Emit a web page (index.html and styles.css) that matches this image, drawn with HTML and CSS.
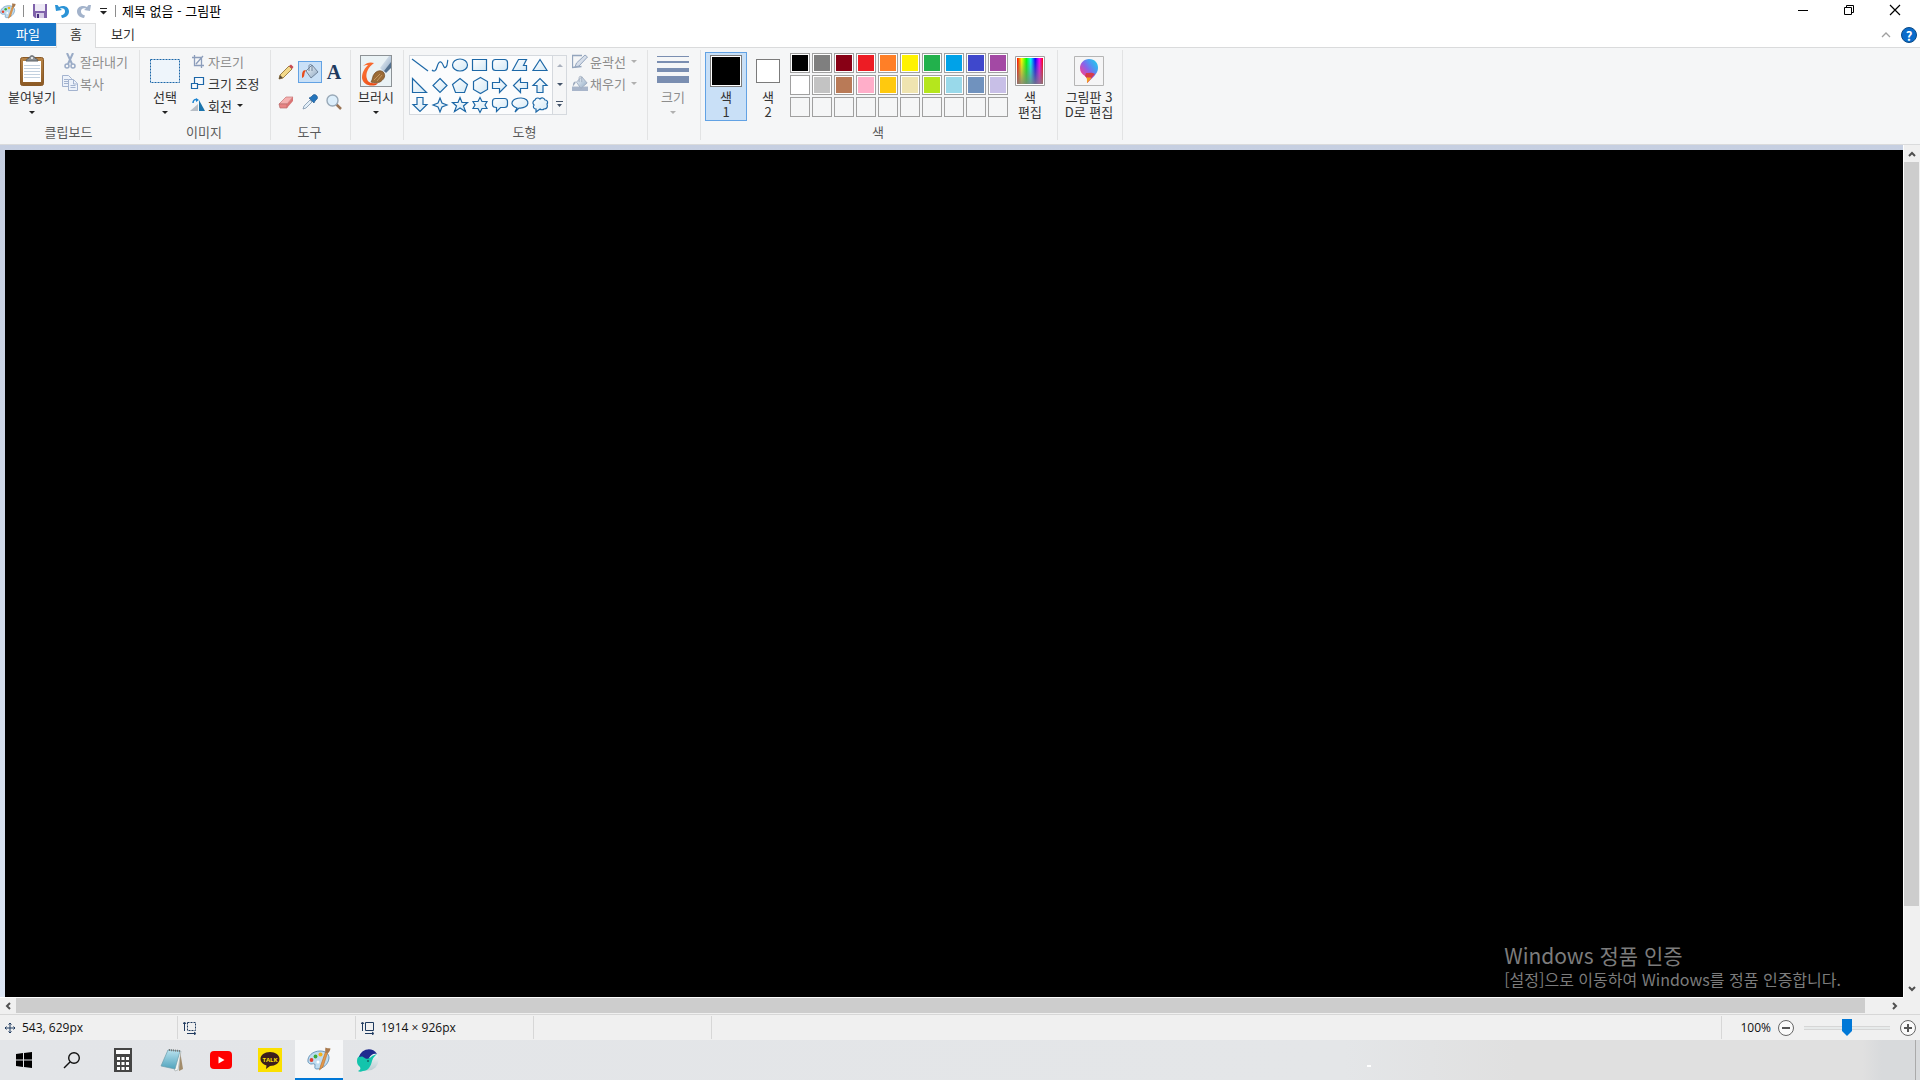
FILE: index.html
```html
<!DOCTYPE html>
<html lang="ko">
<head>
<meta charset="utf-8">
<title>제목 없음 - 그림판</title>
<link rel="stylesheet" href="styles.css">
</head>
<body>
<svg class="defs" aria-hidden="true">
  <defs>
    <linearGradient id="shade" x1="0" y1="0" x2="1" y2="1"><stop offset="0" stop-color="#fff"/><stop offset="1" stop-color="#d3e8f5"/></linearGradient>
    <linearGradient id="wood" x1="0" y1="0" x2="0" y2="1"><stop offset="0" stop-color="#b98547"/><stop offset="1" stop-color="#8c5a24"/></linearGradient>
    <linearGradient id="orange" x1="0" y1="0" x2="1" y2="1"><stop offset="0" stop-color="#ff7a3d"/><stop offset="1" stop-color="#e8420c"/></linearGradient>
    <linearGradient id="metal" x1="0" y1="0" x2="1" y2="1"><stop offset="0" stop-color="#f4f8fb"/><stop offset="1" stop-color="#8fa9c4"/></linearGradient>
    <linearGradient id="drop" x1="1" y1="0" x2="0" y2="1"><stop offset="0" stop-color="#18d8e8"/><stop offset=".3" stop-color="#4a9af2"/><stop offset=".5" stop-color="#8a62ea"/><stop offset=".75" stop-color="#e8459c"/><stop offset="1" stop-color="#f03060"/></linearGradient>
    <linearGradient id="spectrum"><stop offset="0" stop-color="#f00"/><stop offset=".18" stop-color="#ff0"/><stop offset=".36" stop-color="#0f0"/><stop offset=".53" stop-color="#0ff"/><stop offset=".7" stop-color="#00f"/><stop offset=".86" stop-color="#f0f"/><stop offset="1" stop-color="#f00"/></linearGradient>
    <linearGradient id="fade" x1="0" y1="0" x2="0" y2="1"><stop offset="0" stop-color="#808080" stop-opacity="0"/><stop offset="1" stop-color="#808080" stop-opacity=".85"/></linearGradient>
    <linearGradient id="note" x1="0" y1="0" x2="0" y2="1"><stop offset="0" stop-color="#b9e2ee"/><stop offset="1" stop-color="#4fa3bd"/></linearGradient>
    <linearGradient id="belly" x1="0" y1="0" x2="0" y2="1"><stop offset="0" stop-color="#fff"/><stop offset="1" stop-color="#b9cdd2"/></linearGradient>
    <symbol id="palette" viewBox="0 0 24 24">
      <path d="M1 15C0 9 6 4 13 4c6 0 9 3 9 7-.5 6-6 11-12 11-3 0-2-2-2-4s-2-1-4-1c-1 0-2.500-1-3-2z" fill="#bfdcf0" stroke="#5f8fb5" stroke-width=".9"/>
      <circle cx="4.500" cy="13" r="1.900" fill="#e2402e"/><circle cx="8.500" cy="9.500" r="1.900" fill="#39ac3d"/><circle cx="13.500" cy="7.500" r="2" fill="#f2b21c"/>
      <circle cx="11" cy="15" r="1.500" fill="#fff"/>
      <path d="M12.500 23l1-4 5-14 2 .8-4.500 14z" fill="#e39a4c" stroke="#b86a24" stroke-width=".6"/>
      <path d="M18.300 5.500c0-2-.3-3 .2-5 1.500 1 3 .5 5 1-.5 2-1 4-3 4.800z" fill="#a97a4e"/>
    </symbol>
    <symbol id="bucket" viewBox="0 0 18 18">
      <path d="M5 8l6-6 6 7-7 6z" fill="url(#metal)" stroke="currentColor"/>
      <path d="M8 8V3c0-2 3-2 3 0v5" fill="none" stroke="currentColor"/>
    </symbol>
  </defs>
</svg>

<div class="window">
  <header class="titlebar">
    <div class="quick">
      <svg class="i16" viewBox="0 0 24 24"><use href="#palette"/></svg>
      <span class="bar"></span>
      <button class="plain save" aria-label="저장"><svg width="14" height="14" viewBox="0 0 14 14"><path d="M0 0h14v14H2L0 12z" fill="#7f62ab"/><path d="M2 0h10v7H2z" fill="#eeeaf6"/><path d="M3 9h8v5H3z" fill="#d5cce6"/><path d="M4 10h2v4H4z" fill="#4a3180"/></svg></button>
      <button class="plain" aria-label="실행 취소"><svg width="14" height="14" viewBox="0 0 14 14"><path d="M0 1l1 6 6-1-2-1.500c3-1 5.500.5 5 3.500-.2 2-2 3-4 3.500L7 14c4-.5 7-3 7-6.500C14 3 9 .5 4 3L2.500 1z" fill="#2b93d6"/></svg></button>
      <button class="plain" aria-label="다시 실행"><svg width="14" height="14" viewBox="0 0 14 14"><path d="M14 1l-1 6-6-1 2-1.500c-3-1-5.500.5-5 3.500.2 2 2 3 4 3.500L7 14c-4-.5-7-3-7-6.500C0 3 5 .5 10 3l1.500-2z" fill="#a3b3cb"/></svg></button>
      <button class="plain more" aria-label="빠른 실행 도구 모음 사용자 지정"><svg width="7" height="7" viewBox="0 0 7 7"><path d="M0 0h7v1H0zM0 3h7L3.500 6.500z" fill="#222"/></svg></button>
      <span class="bar"></span>
      <h1>제목 없음 - 그림판</h1>
    </div>
    <div class="caption">
      <button class="plain" aria-label="최소화"><svg width="12" height="12" viewBox="0 0 12 12"><path d="M1 6.500h10" stroke="#000"/></svg></button>
      <button class="plain" aria-label="이전 크기로 복원"><svg width="12" height="12" viewBox="0 0 12 12"><path d="M1.500 3.500h7v7h-7zM3.500 3V1.500h7v7H9" fill="none" stroke="#000"/></svg></button>
      <button class="plain" aria-label="닫기"><svg width="12" height="12" viewBox="0 0 12 12"><path d="M1 1l10 10M11 1L1 11" stroke="#000" stroke-width="1.200"/></svg></button>
    </div>
  </header>

  <nav class="tabs">
    <button class="tab file">파일</button>
    <button class="tab home">홈</button>
    <button class="tab">보기</button>
    <div class="help">
      <button class="plain" aria-label="리본 최소화"><svg width="10" height="6" viewBox="0 0 10 6"><path d="M1 5l4-4 4 4" fill="none" stroke="#a0a0a0" stroke-width="1.300"/></svg></button>
      <button class="plain round" aria-label="도움말">?</button>
    </div>
  </nav>

  <section class="ribbon">
    <div class="group clipboard">
      <div class="body">
        <button class="big paste"><span class="pic"><svg width="26" height="32" viewBox="0 0 26 32"><rect x="1.500" y="2.500" width="23" height="28" rx="2" fill="url(#wood)" stroke="#8a5a28"/><path d="M4 6h18v21H4z" fill="#fff"/><path d="M5 10.500h16M5 13.500h16M5 16.500h16M5 19.500h16M5 22.500h16" stroke="#c3d1df"/><path d="M7 6c0-2 2-2 3-3 1-3 5-3 6 0 1 1 3 1 3 3z" fill="#8c9196" stroke="#5c6064"/><circle cx="13" cy="3" r="1" fill="#fff"/></svg></span><span>붙여넣기</span><i class="arrow"></i></button>
        <div class="rows">
          <button class="small" disabled><svg class="i16" viewBox="0 0 16 16" fill="none" stroke="#9aabc6" stroke-width="2"><path d="M5 0l5 11M11 0L6 11"/><circle cx="5" cy="13" r="2" stroke-width="1.500"/><circle cx="11" cy="13" r="2" stroke-width="1.500"/></svg>잘라내기</button>
          <button class="small" disabled><svg class="i16" viewBox="0 0 16 16" fill="#edf2fa" stroke="#a3b3cf"><path d="M.5.500h6l3 3v8h-9z"/><path d="M2 4.500h4M2 6.500h4M2 8.500h4"/><path d="M6.500 4.500h5l4 4v7h-9z"/><path d="M11.500 5v4h4M8.500 10.500h5M8.500 12.500h5"/></svg>복사</button>
        </div>
      </div>
      <h2>클립보드</h2>
    </div>

    <div class="group image">
      <div class="body">
        <button class="big"><span class="pic"><svg width="30" height="24" viewBox="0 0 30 24"><rect x=".5" y=".5" width="29" height="23" fill="#eef5fb" stroke="#1b66a8" stroke-dasharray="2 1"/></svg></span><span>선택</span><i class="arrow"></i></button>
        <div class="rows">
          <button class="small" disabled><svg class="i16" viewBox="0 0 16 16" fill="none" stroke="#8c9dbb"><path d="M4.500 2v10.500H14M2 4.500h9.500V15M6 11l7-8" stroke-width="1.300"/></svg>자르기</button>
          <button class="small"><svg class="i16" viewBox="0 0 16 16" fill="#f5f9fd" stroke="#1b66a8" stroke-width="1.200"><path d="M4.500 2.500h9v7h-9z"/><path d="M1.500 8.500h6v5h-6z"/></svg>크기 조정</button>
          <button class="small"><svg class="i16" viewBox="0 0 16 16"><path d="M0 14l8-7v7z" fill="#b8bec6"/><path d="M9 3l6 11H9z" fill="#1b74ad"/><path d="M3 6c0-3 2-4 4-3" fill="none" stroke="#1b83d1" stroke-width="1.500"/><path d="M6 1l3 2-3 2z" fill="#1b83d1"/></svg>회전<i class="arrow"></i></button>
        </div>
      </div>
      <h2>이미지</h2>
    </div>

    <div class="group tools">
      <div class="toolgrid">
        <button class="tool" aria-label="연필"><svg class="i16" viewBox="0 0 16 16"><path d="M1 15l1-4L11 2l3 3-9 9z" fill="#f3d98a" stroke="#8a6a2c" stroke-width=".8"/><path d="M11 2l2-1.500L15.500 3 14 5z" fill="#c94b51"/><path d="M1 15l1-4 3 3z" fill="#5a4a38"/></svg></button>
        <button class="tool on" aria-label="색 채우기"><svg class="i18" viewBox="0 0 18 18" color="#71849b"><use href="#bucket"/><path d="M5 7C1 7 1 10 1 15c3-1 2-4 3-6z" fill="#e84b1c"/></svg></button>
        <button class="tool letter" aria-label="텍스트">A</button>
        <button class="tool" aria-label="지우개"><svg class="i16" viewBox="0 0 16 16"><path d="M1 10l7-7 7 0-6 7z" fill="#f5b1b1" stroke="#c67575" stroke-width=".7"/><path d="M1 10h8v4H2z" fill="#e88585" stroke="#b96a6a" stroke-width=".7"/><path d="M9 10l6-7v4l-6 7z" fill="#d97474"/></svg></button>
        <button class="tool" aria-label="색 선택"><svg class="i16" viewBox="0 0 16 16"><path d="M1 15l1-3 6-6 2 2-6 6z" fill="#e2eef8" stroke="#7c93ab" stroke-width=".8"/><path d="M7 4l5 5 1-2 2-2c2-2-2-6-4-4L9 3z" fill="#2474bb" stroke="#1a4f86" stroke-width=".6"/></svg></button>
        <button class="tool" aria-label="돋보기"><svg class="i16" viewBox="0 0 16 16"><path d="M10 10l5 5" stroke="#9a7455" stroke-width="2.500"/><circle cx="6.500" cy="6.500" r="5.500" fill="#dceefb" stroke="#99a9b8" stroke-width="1.400"/></svg></button>
      </div>
      <h2>도구</h2>
    </div>

    <div class="group brush">
      <div class="body center">
        <button class="big wide"><span class="pic"><svg width="32" height="32" viewBox="0 0 32 32"><rect x=".5" y=".5" width="31" height="31" fill="#eaf2f5" stroke="#8d9296"/><path d="M3 11c4-4 8-4 11-3-6 4-9 11-7 16 1 4 6 5 11 4l-2 2C9 32 3 29 2 23c0-6 3-10 6-13-2 0-3 0-5 1z" fill="url(#orange)"/><path d="M20 13L29 1h2v10l-7 6z" fill="url(#metal)"/><path d="M24 16l7-9v6l-5 5z" fill="#54718f"/><path d="M11 27c2-3 1-6 4-9 3-3 7-3 9 0 2 4-1 7-4 9-3 1-6 1-9 0z" fill="#9b6b36" stroke="#6a4520" stroke-width=".7"/><path d="M14 25l6-6M17 26l5-6" stroke="#c59862"/></svg></span><span>브러시</span><i class="arrow"></i></button>
      </div>
    </div>

    <div class="group shapes">
      <div class="body">
        <div class="gallery">
          <svg class="shapegrid" width="142" height="58" viewBox="0 0 142 58" fill="url(#shade)" stroke="#1d68a7" stroke-width="1.200">
            <path d="M2 3l16 12"/>
            <path d="M22 14c2 2 4 1 5-3s3-7 5-4 2 6 4 4 1-6 2-7" fill="none"/>
            <ellipse cx="50" cy="9" rx="7.500" ry="6"/><path d="M62.500 3.500h14v11h-14z"/><rect x="82.500" y="3.500" width="15" height="11" rx="3"/>
            <path d="M102.500 14.500l6-11h8l-3 6h3v5z"/><path d="M130 3.500l7 11h-14z"/>
            <path d="M2.500 22.500v14h14z"/><path d="M30 22.500l7 7-7 7-7-7z"/><path d="M50 22.500l7.500 6-3 8h-9l-3-8z"/><path d="M70.500 21.500l7 4v8l-7 4-7-4v-8z"/>
            <path d="M82.500 26.500h7v-4l7 7-7 7v-4h-7z"/><path d="M117.500 26.500h-7v-4l-7 7 7 7v-4h7z"/><path d="M127 36.500v-7h-4l7-7 7 7h-4v7z"/>
            <path d="M7 41.500v7H3l7 7 7-7h-4v-7z"/><path d="M30 42l2 5 5 2-5 2-2 5-2-5-5-2 5-2z"/>
            <path d="M50 41.500l2 5h5.500l-4 3.500 2 5.500-5.500-3.500-5.500 3.500 2-5.500-4-3.500H48z"/>
            <path d="M70 41.500l2 4h5l-2 3.500 2 3.500h-5l-2 4-2-4h-5l2-3.500-2-3.500h5z"/>
            <path d="M85.500 42.500h9c2 0 3 1 3 3v3c0 2-1 3-3 3h-4l-4 4v-4c-3 0-4-1-4-3v-3c0-2 1-3 3-3z"/>
            <path d="M107 52c-9-3-5-10 4-10 10 0 9 11-2 10l-4 4z"/>
            <path d="M125 44c1-3 4-2 5-1 2-2 4-1 5 1 3 0 3 3 2 4 1 3 0 5-3 5-1 1-3 1-4 0l-4 3v-3c-3 0-3-3-2-4-2-2-1-4 1-5z"/>
          </svg>
          <div class="spin">
            <button class="plain" aria-label="위로"><i class="arrow up"></i></button>
            <button class="plain" aria-label="아래로"><i class="arrow"></i></button>
            <button class="plain" aria-label="자세히"><svg width="7" height="7" viewBox="0 0 7 7"><path d="M0 0h7v1H0zM1 3h5L3.500 6z" fill="#44546a"/></svg></button>
          </div>
        </div>
        <div class="rows">
          <button class="small" disabled><svg class="i16" viewBox="0 0 16 16"><path d="M10 2.500H.500v12l9-1" fill="none" stroke="#94a5bd" stroke-width="1.300"/><path d="M3 14l1.500-4L13 2l2.500 2L7 13z" fill="#d6deea" stroke="#94a5bd"/></svg>윤곽선<i class="arrow"></i></button>
          <button class="small" disabled><svg class="i16" viewBox="0 0 18 18" color="#9daabd"><path d="M0 13h18v5H0z" fill="#a8b5ca"/><use href="#bucket"/><path d="M4 7c-3 1-3 3-3 6l3-4z" fill="#9daabd"/></svg>채우기<i class="arrow"></i></button>
        </div>
      </div>
      <h2>도형</h2>
    </div>

    <div class="group size">
      <div class="body center">
        <button class="big" disabled><span class="pic"><svg width="32" height="32" viewBox="0 0 32 32" fill="#7a8eb1"><path d="M0 1h32v1H0zM0 6h32v2H0zM0 13h32v4H0zM0 21h32v7H0z"/></svg></span><span>크기</span><i class="arrow"></i></button>
      </div>
    </div>

    <div class="group colors">
      <div class="body">
        <button class="big on"><span class="pic"><span class="swatch one"></span></span><span>색<br>1</span></button>
        <button class="big"><span class="pic"><span class="swatch two"></span></span><span>색<br>2</span></button>
        <div class="chips">
          <button aria-label="검정" style="--c:#000"></button><button aria-label="회색 50%" style="--c:#7f7f7f"></button><button aria-label="진한 빨강" style="--c:#880015"></button><button aria-label="빨강" style="--c:#ed1c24"></button><button aria-label="주황" style="--c:#ff7f27"></button><button aria-label="노랑" style="--c:#fff200"></button><button aria-label="녹색" style="--c:#22b14c"></button><button aria-label="옥색" style="--c:#00a2e8"></button><button aria-label="남색" style="--c:#3f48cc"></button><button aria-label="자주" style="--c:#a349a4"></button>
          <button aria-label="흰색" style="--c:#fff"></button><button aria-label="회색 25%" style="--c:#c3c3c3"></button><button aria-label="갈색" style="--c:#b97a57"></button><button aria-label="장미" style="--c:#ffaec9"></button><button aria-label="황금색" style="--c:#ffc90e"></button><button aria-label="연한 노랑" style="--c:#efe4b0"></button><button aria-label="라임" style="--c:#b5e61d"></button><button aria-label="연한 옥색" style="--c:#99d9ea"></button><button aria-label="청회색" style="--c:#7092be"></button><button aria-label="연보라" style="--c:#c8bfe7"></button>
          <button class="empty" aria-label="빈 색 1"></button><button class="empty" aria-label="빈 색 2"></button><button class="empty" aria-label="빈 색 3"></button><button class="empty" aria-label="빈 색 4"></button><button class="empty" aria-label="빈 색 5"></button><button class="empty" aria-label="빈 색 6"></button><button class="empty" aria-label="빈 색 7"></button><button class="empty" aria-label="빈 색 8"></button><button class="empty" aria-label="빈 색 9"></button><button class="empty" aria-label="빈 색 10"></button>
        </div>
        <button class="big"><span class="pic"><svg width="30" height="30" viewBox="0 0 30 30"><path d="M.5.500h29v29H.500z" fill="#fff" stroke="#a0a0a0"/><path d="M2 2h26v26H2z" fill="url(#spectrum)"/><path d="M2 2h26v26H2z" fill="url(#fade)"/></svg></span><span>색<br>편집</span></button>
      </div>
      <h2>색</h2>
    </div>

    <div class="group three">
      <div class="body center">
        <button class="big wide"><span class="pic"><svg width="30" height="30" viewBox="0 0 30 30"><path d="M.5.500h29v29H.500z" fill="#f5f5f6" stroke="#b5b5b5"/><path d="M15 3c6 0 9 4 9 9 0 6-6 10-11 15 1-4 0-5-2-7-3-2-5-4-5-8 0-5 4-9 9-9z" fill="url(#drop)"/><path d="M12 17c3 0 6-1 9 1-3 3-5 6-8 9 1-4 0-5-2-7z" fill="#d63a4c"/><path d="M12.500 21c2 1 4 0 5 1l-4.500 5c0-3 0-4-.5-6z" fill="#f2a020"/></svg></span><span>그림판 3<br>D로 편집</span></button>
      </div>
    </div>
  </section>

  <main class="workspace">
    <div class="view">
      <div class="canvas">
        <div class="watermark"><p class="lead">Windows 정품 인증</p><p>[설정]으로 이동하여 Windows를 정품 인증합니다.</p></div>
      </div>
    </div>
    <div class="vscroll">
      <button class="plain" aria-label="위로 스크롤"><svg width="8" height="6" viewBox="0 0 8 6"><path d="M1 5l3-3 3 3" /></svg></button>
      <div class="track"><div class="thumb"></div></div>
      <button class="plain" aria-label="아래로 스크롤"><svg width="8" height="6" viewBox="0 0 8 6"><path d="M1 1l3 3 3-3"/></svg></button>
    </div>
    <div class="hscroll">
      <button class="plain" aria-label="왼쪽으로 스크롤"><svg width="6" height="8" viewBox="0 0 6 8"><path d="M5 1L2 4l3 3"/></svg></button>
      <div class="track"><div class="thumb"></div></div>
      <button class="plain" aria-label="오른쪽으로 스크롤"><svg width="6" height="8" viewBox="0 0 6 8"><path d="M1 1l3 3-3 3"/></svg></button>
    </div>
    <div class="corner"></div>
  </main>

  <footer class="status">
    <div class="cell"><svg width="12" height="12" viewBox="0 0 12 12" fill="none" stroke="#1f3a5f"><path d="M6 1v10M1 6h10M4.500 2.500L6 1l1.500 1.500M4.500 9.500L6 11l1.500-1.500M2.500 4.500L1 6l1.500 1.500M9.500 4.500L11 6 9.500 7.500"/></svg><span>543, 629px</span></div>
    <div class="cell"><svg width="14" height="14" viewBox="0 0 14 14" fill="none" stroke="#1f3a5f"><path d="M4.500 1.500h8v8h-8z" stroke-dasharray="2 1"/><path d="M1.500 10V2M0 3l1.500-2L3 3M4 12.500h8M11 11l2 1.500-2 1.500"/></svg></div>
    <div class="cell"><svg width="14" height="14" viewBox="0 0 14 14" fill="none" stroke="#1f3a5f"><path d="M4.500 1.500h8v8h-8z"/><path d="M1.500 10V2M0 3l1.500-2L3 3M4 12.500h8M11 11l2 1.500-2 1.500"/></svg><span>1914 × 926px</span></div>
    <div class="cell"></div>
    <div class="zoom">
      <label for="zoom">100%</label>
      <button class="plain" aria-label="축소"><svg width="16" height="16" viewBox="0 0 16 16"><circle cx="8" cy="8" r="7.500" fill="#fafafa" stroke="#666"/><path d="M4 7h8v2H4z" fill="#555"/></svg></button>
      <input type="range" id="zoom" min="0" max="100" value="50">
      <button class="plain" aria-label="확대"><svg width="16" height="16" viewBox="0 0 16 16"><circle cx="8" cy="8" r="7.500" fill="#fafafa" stroke="#666"/><path d="M4 7h3V4h2v3h3v2H9v3H7V9H4z" fill="#555"/></svg></button>
    </div>
  </footer>
</div>

<nav class="taskbar">
  <button class="app" aria-label="시작"><svg width="16" height="16" viewBox="0 0 16 16"><path d="M0 2l7-1v6.500H0zM8 1l8-1v7.500H8zM0 8.500h7V15l-7-1zM8 8.500h8V16l-8-1z"/></svg></button>
  <button class="app" aria-label="검색"><svg width="18" height="18" viewBox="0 0 18 18" fill="none" stroke="#111" stroke-width="1.400"><circle cx="11" cy="7" r="5.300"/><path d="M7 11l-6 6"/></svg></button>
  <div class="pins">
    <button class="app" aria-label="계산기"><svg width="18" height="24" viewBox="0 0 18 24"><path d="M0 0h18v24H0z" fill="#454545"/><path d="M2 2h14v4H2z" fill="#fff"/><path d="M3 10.500h12M3 15.500h12M3 20.500h12" stroke="#fff" stroke-width="3" stroke-dasharray="3 1.500"/></svg></button>
    <button class="app" aria-label="메모장"><svg width="24" height="24" viewBox="0 0 24 24"><path d="M20 3l3 18-4 2z" fill="#a28c6b"/><path d="M8 2l13 1-3 19-3 1z" fill="#f5f5f0" stroke="#9fa9ac" stroke-width=".6"/><path d="M8 2l12 1-5 18L1 18z" fill="url(#note)" stroke="#6b9dac" stroke-width=".7"/><path d="M9 2l11 1" stroke="#777" stroke-width="2" stroke-dasharray="1 1"/></svg></button>
    <button class="app" aria-label="YouTube"><svg width="24" height="24" viewBox="0 0 24 24"><rect x="1" y="3" width="22" height="18" rx="4" fill="#f00"/><path d="M9.500 8.500v7l6-3.500z" fill="#fff"/></svg></button>
    <button class="app" aria-label="카카오톡"><svg width="24" height="24" viewBox="0 0 24 24"><path d="M0 0h24v24H0z" fill="#fbe000"/><path d="M12 4c5.500 0 9.500 3 9.500 7s-4 7-9.500 7l-4 3 .5-3.500C5 16.500 2.500 14 2.500 11c0-4 4-7 9.500-7z" fill="#3b1e1e"/><text x="12" y="13.500" text-anchor="middle" class="talk">TALK</text></svg></button>
    <button class="app active" aria-label="그림판"><svg width="24" height="24" viewBox="0 0 24 24"><use href="#palette"/></svg></button>
    <button class="app" aria-label="웨일"><svg width="22" height="23" viewBox="0 0 22 23"><circle cx="11" cy="11" r="10.500" fill="url(#belly)"/><path d="M0 12C0 8 2 6 6 7c4 1 6 3 8 1 2-2 4-2 6-3-1 1-4 3-5 7-1 5-4 10-9 10-2 1-4 1-5 0 2-1 3-2 2-4-2-2-3-3-3-6z" fill="#13c4ac"/><path d="M2 8C4 0 15-3 20 5c-4-1-6 1-8 4-2 2-4 0-6-1-1-1-3 0-4 0z" fill="#1f2b8f"/><circle cx="11" cy="12" r=".8" fill="#123"/></svg></button>
  </div>
  <span class="speck"></span>
  <button class="plain desktop" aria-label="바탕 화면 보기"></button>
</nav>
</body>
</html>
```
FILE: styles.css
```css
* { box-sizing: border-box; }

body {
  margin: 0;
  height: 100vh;
  display: flex;
  flex-direction: column;
  overflow: hidden;
  background: #fff;
  color: #333;
  font: 13px/15px "Noto Sans CJK KR", sans-serif;
}

button { font: inherit; color: inherit; background: none; border: 0; padding: 0; margin: 0; }
svg { display: block; flex: none; }
h1, h2, p { margin: 0; font-weight: 400; }
h1, h2 { font-size: 13px; }
.defs { position: absolute; width: 0; height: 0; }
.i16 { width: 16px; height: 16px; }
.i18 { width: 18px; height: 18px; }
.plain { display: flex; align-items: center; justify-content: center; }
.window { flex: 1; min-height: 0; display: flex; flex-direction: column; }

/* title bar */
.titlebar { display: flex; justify-content: space-between; height: 23px; }
.quick { display: flex; align-items: center; gap: 8px; padding-bottom: 1px; }
.quick .save { margin-left: 1px; }
.quick .bar { width: 1px; height: 12px; background: #8c8c8c; }
.quick .bar:first-of-type { margin-left: -1px; }
.quick h1 { color: #000; margin-left: -2px; padding-bottom: 1px; }
.quick .more { width: 8px; }
.caption { display: flex; padding-right: 2px; }
.caption .plain { width: 46px; height: 20px; }

/* ribbon tabs */
.tabs { display: flex; height: 25px; border-bottom: 1px solid #dadbdc; }
.tab { padding: 0 15px 4px; }
.tab.file { width: 56px; height: 23px; padding: 0 0 3px; background: #1979ca; color: #fff; }
.tab.home { width: 40px; height: 25px; padding: 0 0 5px; background: #f5f6f7; border: 1px solid #dadbdc; border-bottom: 0; }
.help { display: flex; align-items: center; gap: 10px; margin-left: auto; padding-right: 3px; }
.round { width: 16px; height: 16px; border-radius: 50%; background: #0a6ccb; border: 1px solid #0b4a86; color: #fff; font-weight: 700; }

/* ribbon */
.ribbon { display: flex; height: 97px; padding: 2px 0 4px; background: #f5f6f7; border-bottom: 1px solid #dadbdc; }
.group { display: flex; flex-direction: column; border-right: 1px solid #e2e3e4; }
.group h2 { margin-top: auto; height: 16px; padding-right: 2px; text-align: center; color: #5a5a5a; }
.body { display: flex; }
.body.center { justify-content: center; padding-right: 2px; }
.clipboard { width: 140px; }
.clipboard .body { padding-left: 7px; gap: 5px; }
.image { width: 131px; }
.image .body { padding-left: 4px; gap: 4px; }
.tools { width: 80px; }
.brush, .size { width: 53px; }
.shapes { width: 244px; }
.shapes .body { padding-left: 5px; gap: 5px; }
.colors { width: 357px; }
.colors .body { padding-left: 4px; }
.three { width: 65px; }

.big { display: flex; flex-direction: column; align-items: center; width: 42px; height: 69px; margin-top: 2px; padding-top: 2px; border: 1px solid transparent; text-align: center; white-space: nowrap; }
.big .pic { display: flex; align-items: center; justify-content: center; width: 32px; height: 32px; margin-bottom: 2px; }
.big.paste, .big.wide { width: 50px; }
.big .arrow { margin-top: 7px; }
.big.on, .tool.on { background: #c9e0f7; border: 1px solid #62a2e4; }
.rows { display: flex; flex-direction: column; }
.small { display: flex; align-items: center; gap: 2px; height: 22px; white-space: nowrap; }
.small .arrow { margin-left: 3px; }
button:disabled { color: #8d8d8d; }

.arrow { flex: none; border: solid transparent; border-width: 3px 3px 0; border-top-color: #222; }
.arrow.up { border-width: 0 3px 3px; border-bottom-color: #a9b0bd; }
button:disabled .arrow { border-top-color: #b0b0b0; }

.toolgrid { display: grid; grid-template-columns: repeat(3, 24px); grid-auto-rows: 22px; row-gap: 8px; padding: 11px 0 0 3px; }
.tool { display: flex; align-items: center; justify-content: center; }
.letter { font: 700 20px/20px "Liberation Serif", serif; color: #1f3a5f; }

.gallery { display: flex; height: 60px; margin-top: 5px; border: 1px solid #d5d9de; background: #fbfcfd; }
.spin { display: flex; flex-direction: column; width: 14px; border-left: 1px solid #d5d9de; background: #f5f6f7; }
.spin .plain { flex: 1; }
.spin .arrow:not(.up) { border-top-color: #44546a; }

.swatch { border: 1px solid #7b7b7b; box-shadow: inset 0 0 0 1px #fff; }
.one { width: 32px; height: 32px; background: #000; }
.two { width: 24px; height: 24px; background: #fff; }
.chips { display: grid; grid-template-columns: repeat(10, 20px); grid-auto-rows: 20px; gap: 2px; margin: 3px 1px 0; }
.chips button { border: 1px solid #a0a0a0; background: var(--c); box-shadow: inset 0 0 0 1px #fff; }
.chips .empty { background: #f5f6f7; box-shadow: none; }

/* drawing area */
.workspace { flex: 1; min-height: 0; display: grid; grid-template: 1fr 17px / 1fr 17px; }
.view { display: flex; padding: 5px 0 0 5px; background: linear-gradient(#c6cfe1, #dce6f4); }
.canvas { flex: 1; position: relative; background: #000; }
.watermark { position: absolute; right: 62px; bottom: 6px; color: #7c7c7c; font-size: 16px; line-height: 23px; font-weight: 300; white-space: nowrap; }
.watermark .lead { font-size: 21px; line-height: 25px; }
.vscroll, .hscroll, .corner { background: #f0f0f0; }
.vscroll, .hscroll { display: flex; }
.vscroll { flex-direction: column; border-left: 1px solid #fff; padding-right: 1px; }
.hscroll { border-top: 1px solid #fff; padding-bottom: 1px; }
.vscroll .plain { height: 17px; }
.hscroll .plain { width: 16px; }
.track { flex: 1; display: flex; }
.vscroll .track { flex-direction: column; }
.thumb { background: #cdcdcd; }
.vscroll .thumb { height: 91%; }
.hscroll .thumb { width: 98.8%; }
.workspace .plain path { fill: none; stroke: #505050; stroke-width: 2; }

/* status bar */
.status { display: flex; height: 26px; padding: 1px 0; background: #f0f0f0; border-top: 1px solid #d7d7d7; color: #111; font: 12px/15px "Open Sans", "Noto Sans CJK KR", sans-serif; }
.cell { display: flex; align-items: center; gap: 6px; width: 178px; padding-left: 4px; border-right: 1px solid #d7d7d7; }
.cell + .cell { padding-left: 5px; }
.zoom { display: flex; align-items: center; margin-left: auto; padding: 0 4px 0 18px; border-left: 1px solid #d7d7d7; }
.zoom label { margin-right: 7px; }
.zoom input { appearance: none; width: 86px; height: 18px; margin: 0 10px; background: linear-gradient(#d6d6d6, #d6d6d6 1px, #e7eaea 1px, #e7eaea 3px, #d6d6d6 3px) center / 100% 4px no-repeat; }
.zoom input::-webkit-slider-runnable-track { height: 17px; }
.zoom input::-webkit-slider-thumb { appearance: none; width: 10px; height: 17px; background: #0078d7; clip-path: polygon(0 0, 100% 0, 100% 70%, 50% 100%, 0 70%); }

/* taskbar */
.taskbar { position: relative; display: flex; height: 40px; background: linear-gradient(90deg, #e3e5e8 0, #e4e6e8 70%, #e0e0e0 79%, #e0e0e0 97%, #d8dadc 98%); }
.app { display: flex; align-items: center; justify-content: center; width: 48px; height: 40px; }
.pins { display: flex; gap: 1px; margin-left: 3px; }
.active { background: #f6f7f8; border-bottom: 2px solid #0078d7; }
.talk { fill: #fbe000; font: 700 6px "Open Sans", sans-serif; }
.speck { position: absolute; left: 71.2%; top: 25px; width: 4px; height: 2px; background: #fff; }
.desktop { width: 5px; margin-left: auto; border-left: 1px solid #aaa; }
```
